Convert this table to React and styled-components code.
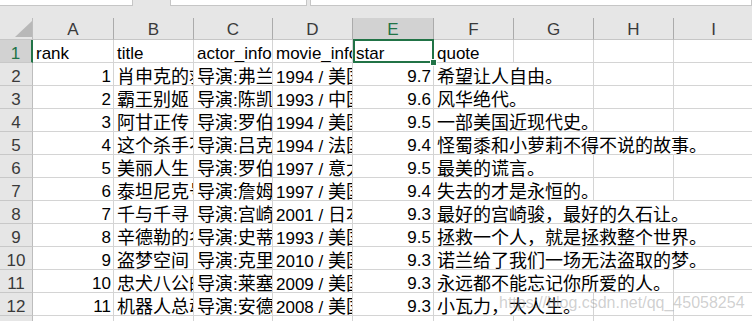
import React from 'react';
import styled, { createGlobalStyle, css } from 'styled-components';

const GREEN = '#217346';

const GlobalStyle = createGlobalStyle`
  html, body {
    margin: 0;
    padding: 0;
    background: #fff;
  }
  body {
    width: 752px;
    height: 321px;
    overflow: hidden;
    font-family: "Liberation Sans", Arial, "Noto Sans CJK SC", sans-serif;
  }
`;

const columns = ['A', 'B', 'C', 'D', 'E', 'F', 'G', 'H', 'I'];

// quote span = how many columns (F..I) the overflowing text covers
const rows = [
  [1, '肖申克的救赎', '导演:弗兰克·德拉邦特 Frank Darabont', '1994 / 美国 / 犯罪 剧情', '9.7', '希望让人自由。', 2],
  [2, '霸王别姬', '导演:陈凯歌 Kaige Chen', '1993 / 中国大陆 中国香港 / 剧情 爱情 同性', '9.6', '风华绝代。', 2],
  [3, '阿甘正传', '导演:罗伯特·泽米吉斯 Robert Zemeckis', '1994 / 美国 / 剧情 爱情', '9.5', '一部美国近现代史。', 2],
  [4, '这个杀手不太冷', '导演:吕克·贝松 Luc Besson', '1994 / 法国 / 剧情 动作 犯罪', '9.4', '怪蜀黍和小萝莉不得不说的故事。', 4],
  [5, '美丽人生', '导演:罗伯托·贝尼尼 Roberto Benigni', '1997 / 意大利 / 剧情 喜剧 爱情 战争', '9.5', '最美的谎言。', 2],
  [6, '泰坦尼克号', '导演:詹姆斯·卡梅隆 James Cameron', '1997 / 美国 / 剧情 爱情 灾难', '9.4', '失去的才是永恒的。', 2],
  [7, '千与千寻', '导演:宫崎骏 Hayao Miyazaki', '2001 / 日本 / 剧情 动画 奇幻', '9.3', '最好的宫崎骏，最好的久石让。', 4],
  [8, '辛德勒的名单', '导演:史蒂文·斯皮尔伯格 Steven Spielberg', '1993 / 美国 / 剧情 历史 战争', '9.5', '拯救一个人，就是拯救整个世界。', 4],
  [9, '盗梦空间', '导演:克里斯托弗·诺兰 Christopher Nolan', '2010 / 美国 英国 / 剧情 科幻 悬疑 冒险', '9.3', '诺兰给了我们一场无法盗取的梦。', 4],
  [10, '忠犬八公的故事', '导演:莱塞·霍尔斯道姆 Lasse Hallström', '2009 / 美国 英国 / 剧情', '9.3', '永远都不能忘记你所爱的人。', 3],
  [11, '机器人总动员', '导演:安德鲁·斯坦顿 Andrew Stanton', '2008 / 美国 / 科幻 动画 冒险', '9.3', '小瓦力，大人生。', 2],
];

const CJK = /([\u3000-\u303f\u4e00-\u9fff\uff00-\uffef]+)/;

function Text({ children }) {
  const parts = String(children).split(CJK);
  return parts.map((p, i) => (i % 2 === 1 ? <Cjk key={i}>{p}</Cjk> : p));
}

export default function App() {
  return (
    <Page>
      <GlobalStyle />
      <TopStrip>
        <FieldBox $width={133} />
        <Spacer $width={37} />
        <FieldBox $width={137} $left />
        <Spacer $width={3} />
        <FieldBox $grow $left />
      </TopStrip>
      <Band />
      <Sheet>
        <Corner>
          <Triangle />
        </Corner>
        {columns.map((c) => (
          <ColHead key={c} $active={c === 'E'}>
            {c}
          </ColHead>
        ))}

        <RowHead $active>1</RowHead>
        <Cell>rank</Cell>
        <Cell>title</Cell>
        <Cell>actor_info</Cell>
        <Cell>movie_info</Cell>
        <Cell $selected>
          star
          <Selection>
            <Handle />
          </Selection>
        </Cell>
        <Cell>quote</Cell>
        <Cell />
        <Cell />
        <Cell />

        {rows.map(([rank, title, actor, movie, star, quote, span], i) => (
          <React.Fragment key={rank}>
            <RowHead>{i + 2}</RowHead>
            <Cell $right>{rank}</Cell>
            <Cell><Text>{title}</Text></Cell>
            <Cell><Text>{actor}</Text></Cell>
            <Cell><Text>{movie}</Text></Cell>
            <Cell $right>{star}</Cell>
            <Cell $span={span}><Text>{quote}</Text></Cell>
            {Array.from({ length: 4 - span }).map((_, k) => (
              <Cell key={k} />
            ))}
          </React.Fragment>
        ))}

        <RowHead>13</RowHead>
        {columns.map((c) => (
          <Cell key={c} />
        ))}
      </Sheet>
      <Watermark>https://blog.csdn.net/qq_45058254</Watermark>
    </Page>
  );
}

const Page = styled.div`
  position: relative;
  width: 752px;
  height: 321px;
  overflow: hidden;
  background: #e6e6e6;
`;

const TopStrip = styled.div`
  display: flex;
  height: 6px;
`;

const FieldBox = styled.div`
  box-sizing: border-box;
  height: 6px;
  background: #fff;
  border-bottom: 1px solid #c6c6c6;
  border-right: 1px solid #c6c6c6;
  ${(p) => p.$left && css`border-left: 1px solid #c6c6c6;`}
  ${(p) => (p.$grow ? css`flex: 1;` : css`width: ${p.$width}px;`)}
`;

const Spacer = styled.div`
  width: ${(p) => p.$width}px;
`;

const Band = styled.div`
  height: 12px;
`;

const Sheet = styled.div`
  display: grid;
  grid-template-columns: 33px 81px 80px 79px 80px 81px 80px 80px 80px 80px;
  grid-template-rows: 22px;
  grid-auto-rows: 23px;
  background: #fff;
  font-size: 17px;
`;

const Corner = styled.div`
  box-sizing: border-box;
  display: flex;
  justify-content: flex-end;
  align-items: flex-end;
  padding: 0 0 2px 0;
  background: #e6e6e6;
  border-right: 1px solid #bdbdbd;
  border-bottom: 1px solid #c6c6c6;
`;

const Triangle = styled.div`
  width: 0;
  height: 0;
  border-left: 17px solid transparent;
  border-bottom: 16px solid #b8b8b8;
`;

const ColHead = styled.div`
  box-sizing: border-box;
  padding-top: 2px;
  line-height: 19px;
  text-align: center;
  color: ${(p) => (p.$active ? GREEN : '#3a3a3a')};
  background: ${(p) => (p.$active ? '#d2d2d2' : '#e6e6e6')};
  border-right: 1px solid #ababab;
  border-bottom: 1px solid #c6c6c6;
  overflow: hidden;
`;

const RowHead = styled.div`
  box-sizing: border-box;
  padding-top: 3px;
  line-height: 21px;
  text-align: center;
  color: ${(p) => (p.$active ? GREEN : '#3a3a3a')};
  background: ${(p) => (p.$active ? '#d2d2d2' : '#e6e6e6')};
  border-right: ${(p) => (p.$active ? `2px solid ${GREEN}` : '1px solid #bdbdbd')};
  border-bottom: 1px solid #c8c8c8;
  overflow: hidden;
`;

const Cell = styled.div`
  box-sizing: border-box;
  padding: 3px 2px 0 3px;
  line-height: 21px;
  color: #000;
  white-space: nowrap;
  overflow: hidden;
  text-align: ${(p) => (p.$right ? 'right' : 'left')};
  border-right: 1px solid #d4d4d4;
  border-bottom: 1px solid #d4d4d4;
  ${(p) => p.$span && css`grid-column: span ${p.$span};`}
  ${(p) =>
    p.$selected &&
    css`
      position: relative;
      overflow: visible;
      z-index: 2;
    `}
`;

const Cjk = styled.span`
  font-family: "Noto Sans CJK SC", sans-serif;
  font-size: 18px;
  line-height: 1;
`;

const Selection = styled.div`
  position: absolute;
  left: 0;
  top: -1px;
  right: -1px;
  bottom: -1px;
  border: 2px solid ${GREEN};
  pointer-events: none;
`;

const Handle = styled.div`
  position: absolute;
  right: -5px;
  bottom: -5px;
  width: 5px;
  height: 5px;
  background: ${GREEN};
  border: 1px solid #fff;
`;

const Watermark = styled.div`
  position: absolute;
  left: 499px;
  top: 293px;
  font-size: 16px;
  line-height: 20px;
  color: rgba(150, 150, 150, 0.45);
  white-space: nowrap;
  pointer-events: none;
`;
